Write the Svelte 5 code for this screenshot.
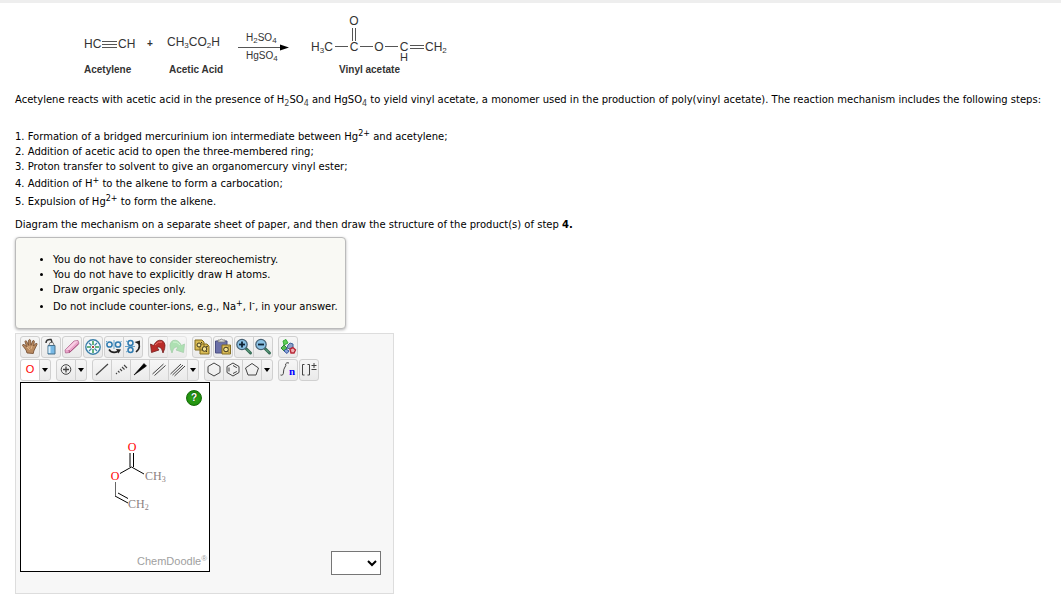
<script>
    // clusters are set apart, groups sit close together, tools inside a group are joined
    const rows = [
        [
            [['hand'], ['clear'], ['erase'], ['center'], ['flipH', 'flipV']],
            [['undo', 'redo']],
            [['copy'], ['paste'], ['zoomIn', 'zoomOut']],
            [['shapes']]
        ],
        [
            [['label', 'more']],
            [['charge', 'more']],
            [['single', 'recessed', 'wedge', 'double', 'triple', 'more']],
            [['hexagon', 'benzene', 'pentagon', 'more']],
            [['chain'], ['bracket']]
        ]
    ];

    const titles = {
        hand: 'Move', clear: 'Clear', erase: 'Erase', center: 'Center', flipH: 'Flip horizontally',
        flipV: 'Flip vertically', undo: 'Undo', redo: 'Redo', copy: 'Copy', paste: 'Paste',
        zoomIn: 'Zoom in', zoomOut: 'Zoom out', shapes: 'Templates', label: 'Oxygen', more: 'More',
        charge: 'Increase charge', single: 'Single bond', recessed: 'Recessed bond', wedge: 'Wedge bond',
        double: 'Double bond', triple: 'Triple bond', hexagon: 'Cyclohexane', benzene: 'Benzene',
        pentagon: 'Cyclopentane', chain: 'Chain', bracket: 'Bracket'
    };

    let active = $state('label');
    let answer = $state('');
</script>

{#snippet icon(name)}
    <svg viewBox="0 0 18 20" width="18" height="20" fill="none" stroke="#444" aria-hidden="true">
        {#if name === 'hand'}
            <path d="M6 16 L5 13 L1.500 8.500 Q1.500 7 3 7.500 L5.500 9.500 L4 4.500 Q4.500 3 5.600 4.200 L7.600 8.300 L7.600 3.200 Q8.500 1.700 9.600 3.200 L10 8.200 L11.800 3.800 Q13.200 3 13.400 4.500 L12.600 9 L14.700 6.500 Q16.400 6 16 7.500 L12.800 14 L12.300 16.500 Z" fill="#b98a60" stroke="#70482b" stroke-width=".8" />
            <path d="M6 10 L9 13 M8 9 L8 11 M11 9 L10 12" stroke="#e2b98e" stroke-width=".9" />
        {:else if name === 'clear'}
            <path d="M6 8.500 H13 V17 H6 Z" fill="#78b9e6" stroke="#49718b" />
            <path d="M7.500 9.500 V16" stroke="#dbf2ff" stroke-width="2" />
            <path d="M7 8 L8 5.500 H11 L12 8" fill="#eee" stroke="#777" />
            <path d="M4 6 Q4 2 9 2.500 L10 5" stroke="#333" stroke-width="1.500" />
        {:else if name === 'erase'}
            <path d="M2 13 L11 4 L15 3.500 L16 6.500 L6.500 15.500 L2.500 16 Z" fill="#eaa4ca" stroke="#b16a91" stroke-width=".8" />
            <path d="M2.500 13 L11.500 4.500 L15 4 L6 13 Z" fill="#f8cee4" stroke="none" />
            <path d="M6 13 L6.500 15.500 L15.500 7" stroke="#a84f7d" />
        {:else if name === 'center'}
            <circle cx="9" cy="10" r="7.200" fill="#f5fcff" stroke="#3b7fa9" stroke-width="1.400" />
            <path d="M9 4 V8 M9 12 V16 M3 10 H7 M11 10 H15" stroke="#399a57" stroke-width="1.500" />
            <path d="M5 6 L7.500 8.500 M13 6 L10.500 8.500 M5 14 L7.500 11.500 M13 14 L10.500 11.500" stroke="#3e80a8" stroke-width="1.200" />
            <path d="M8 9 L10 11 M10 9 L8 11" stroke="#a84343" />
        {:else if name === 'flipH'}
            <circle cx="4.500" cy="7.500" r="2.600" stroke="#2d7ab0" stroke-width="1.500" />
            <circle cx="13" cy="7.500" r="2.600" stroke="#2d7ab0" stroke-width="1.500" />
            <path d="M9 3 V12 M1 4 L3 6 M16.500 4 L15 6" stroke="#68a2c8" />
            <path d="M4 12.500 Q7 17 13 14.500" stroke="#222" stroke-width="1.600" />
            <path d="M11 12 L16 12.500 L13.500 16.500 Z" fill="#222" stroke="none" />
        {:else if name === 'flipV'}
            <circle cx="6.500" cy="6" r="2.500" stroke="#2d7ab0" stroke-width="1.500" />
            <circle cx="6.500" cy="13" r="2.500" stroke="#2d7ab0" stroke-width="1.500" />
            <path d="M1 9.500 H11 M2 4 L4 5 M2 15 L4 14" stroke="#68a2c8" />
            <path d="M12 15 Q17 11 14.500 6" stroke="#222" stroke-width="1.600" />
            <path d="M10.500 5 L16 3.500 L16 8 Z" fill="#222" stroke="none" />
        {:else if name === 'undo'}
            <path d="M1.500 7 L2.500 15.500 L10 13 L8 10.500 Q12 8 14 16 Q18.500 6.500 13 3.500 Q8 2 4.500 8.500 Z" fill="#b92b28" stroke="#741e1e" stroke-width=".8" />
            <path d="M6 8 Q9 4 13 5" stroke="#ef7770" />
        {:else if name === 'redo'}
            <path d="M16.500 7 L15.500 15.500 L8 13 L10 10.500 Q6 8 4 16 Q-.5 6.500 5 3.500 Q10 2 13.500 8.500 Z" fill="#ade0b2" stroke="#a5cea9" stroke-width=".8" />
            <path d="M12 8 Q9 4 5 5" stroke="#d5f5d6" />
        {:else if name === 'copy'}
            <path d="M2 3 H9 L11 5 V13 H2 Z M7 7 H14 L16 9 V17 H7 Z" fill="#d9bb55" stroke="#846d20" />
            <circle cx="6" cy="8" r="2" fill="#f5e597" stroke="#3d351b" />
            <circle cx="11.500" cy="12" r="2.300" fill="#f5e597" stroke="#3d351b" />
            <path d="M8 6 L9 5 M13 10 L15 9 M13 14 L14 15" stroke="#3d351b" />
        {:else if name === 'paste'}
            <path d="M1.500 4 H13 V16 H1.500 Z" fill="#6b70a8" stroke="#4a4e82" />
            <path d="M4 3 H6 Q7 1 9 3 H11 V5 H4 Z" fill="#ddd" stroke="#777" stroke-width=".8" />
            <path d="M8 8 H16.500 V17 H8 Z" fill="#dcbd58" stroke="#846d20" />
            <circle cx="12" cy="12.500" r="2.300" fill="#f4e195" stroke="#3d351b" />
            <path d="M14 10.500 L15 9.500 M14 14.500 L15 15.500" stroke="#3d351b" />
        {:else if name === 'zoomIn' || name === 'zoomOut'}
            <path d="M10.500 11 L15.500 16" stroke="#356c55" stroke-width="3" stroke-linecap="round" />
            <path d="M12 12.500 L15 15.500" stroke="#72b58f" />
            <circle cx="7" cy="7.500" r="5.200" fill="#8ac1e4" stroke="#486174" stroke-width="1.200" />
            <path d="M4 7.500 H10" stroke="#102436" stroke-width="1.800" />
            {#if name === 'zoomIn'}
                <path d="M7 4.500 V10.500" stroke="#102436" stroke-width="1.800" />
            {/if}
        {:else if name === 'shapes'}
            <path d="M5 8 L4 4 L7 2.500 L9 6 Z" fill="#60cf56" stroke="#36a93a" />
            <path d="M2 11 L5 8 L8 11 L5 14 Z" fill="#57bd50" stroke="#2f843c" />
            <path d="M9 8 L11 6 L14 7 V10 L11 12 L8 11 Z" fill="#8d9fc4" stroke="#3f639d" />
            <path d="M11 12 L14 10.500 L16.500 13 L15 16 L12 16 Z" fill="#f0b0b4" stroke="#b82838" stroke-width="1.400" />
            <path d="M5 14 L7 12 L10 14 L8 16.500 Z" fill="#88a6da" stroke="#3755a0" />
        {:else if name === 'label'}
            <text x="9" y="13" text-anchor="middle" fill="red" stroke="none" font-size="11">O</text>
        {:else if name === 'charge'}
            <circle cx="9" cy="9.500" r="4.800" />
            <path d="M9 6.500 V12.500 M6 9.500 H12" stroke-width="1.300" />
        {:else if name === 'single'}
            <path d="M3 15 L15 4" stroke-width="1.200" />
        {:else if name === 'recessed'}
            <path d="M4 13 l1 1 M6 11 l1.500 1.500 M8 9 l2 2 M10 7 l2.500 2.500 M12 5 l3 3" stroke-width="1.100" />
        {:else if name === 'wedge'}
            <path d="M3 15 L13 3.500 L15.500 6 Z" fill="#000" stroke="#000" stroke-width=".6" />
        {:else if name === 'double'}
            <path d="M2.500 14 L13.500 4 M4.500 15.500 L15.500 5.500" />
        {:else if name === 'triple'}
            <path d="M1.500 14 L12 4 M3.500 15 L14 5 M5.500 16 L16 6" />
        {:else if name === 'hexagon'}
            <path d="M9 3 L15 6.500 V12.500 L9 16 L3 12.500 V6.500 Z" />
        {:else if name === 'benzene'}
            <path d="M9 3 L15 6.500 V12.500 L9 16 L3 12.500 V6.500 Z M9 5.500 L12.800 7.700 M12.800 11.500 L9 13.500 M5 11.500 V7.500" />
        {:else if name === 'pentagon'}
            <path d="M9 3.500 L15.500 8 L13 15 H5 L2.500 8 Z" />
        {:else if name === 'chain'}
            <path d="M1.500 15 Q4.500 16 4.500 12 Q4.500 9 6 7 Q7.500 5 6.500 4 Q7.500 2 10 3" />
            <text class="n" x="10" y="15" fill="blue" stroke="none" font-size="11">n</text>
        {:else if name === 'bracket'}
            <path d="M4.500 4.500 H2.500 V15 H4.500 M7.500 4.500 H9.500 V15 H7.500 M14 3 V8 M11.500 5.500 H16.500 M11.500 9.500 H16.500" />
        {/if}
    </svg>
{/snippet}

<div class="strip"></div>
<main>
    <figure>
        <svg class="scheme" viewBox="70 10 400 70" width="400" height="70" role="img" aria-label="Acetylene and acetic acid give vinyl acetate">
            <g font-size="12">
                <text x="84" y="48">HC</text>
                <text x="118" y="48">CH</text>
                <text x="150" y="47" text-anchor="middle" font-size="10" font-weight="bold">+</text>
                <text x="167" y="46">CH<tspan class="sub" dy="2">3</tspan><tspan dy="-2">CO</tspan><tspan class="sub" dy="2">2</tspan><tspan dy="-2">H</tspan></text>
                <text x="311" y="51">H<tspan class="sub" dy="2">3</tspan><tspan dy="-2">C</tspan></text>
                <text x="354" y="51" text-anchor="middle">C</text>
                <text x="354" y="25" text-anchor="middle">O</text>
                <text x="379" y="51" text-anchor="middle">O</text>
                <text x="404" y="51" text-anchor="middle">C</text>
                <text x="404" y="61" text-anchor="middle" font-size="11">H</text>
                <text x="425" y="51">CH<tspan class="sub" dy="2">2</tspan></text>
            </g>
            <g font-size="10">
                <text x="246" y="41">H<tspan class="sub" dy="2">2</tspan><tspan dy="-2">SO</tspan><tspan class="sub" dy="2">4</tspan></text>
                <text x="246" y="59">HgSO<tspan class="sub" dy="2">4</tspan></text>
            </g>
            <g font-size="10" font-weight="bold">
                <text x="84" y="73">Acetylene</text>
                <text x="169" y="73">Acetic Acid</text>
                <text x="339" y="73">Vinyl acetate</text>
            </g>
            <path d="M102 41.500 H117 M102 44.500 H117 M102 47.500 H117 M238 47.500 H282 M335 46.500 H348 M352.500 28 V41 M355.500 28 V41 M360 46.500 H373 M385 46.500 H398 M410 45.500 H424 M410 48.500 H424" stroke="#555" />
            <path d="M280 44.500 L289 47.500 L280 50.500 Z" fill="#000" />
        </svg>
    </figure>

    <p class="intro">Acetylene reacts with acetic acid in the presence of H<sub>2</sub>SO<sub>4</sub> and HgSO<sub>4</sub> to yield vinyl acetate, a monomer used in the production of poly(vinyl acetate). The reaction mechanism includes the following steps:</p>

    <div class="steps">
        <p>1. Formation of a bridged mercurinium ion intermediate between Hg<sup>2+</sup> and acetylene;</p>
        <p>2. Addition of acetic acid to open the three-membered ring;</p>
        <p>3. Proton transfer to solvent to give an organomercury vinyl ester;</p>
        <p>4. Addition of H<sup>+</sup> to the alkene to form a carbocation;</p>
        <p>5. Expulsion of Hg<sup>2+</sup> to form the alkene.</p>
    </div>

    <p class="task">Diagram the mechanism on a separate sheet of paper, and then draw the structure of the product(s) of step <b>4.</b></p>

    <ul class="notes">
        <li>You do not have to consider stereochemistry.</li>
        <li>You do not have to explicitly draw H atoms.</li>
        <li>Draw organic species only.</li>
        <li>Do not include counter-ions, e.g., Na<sup>+</sup>, I<sup>-</sup>, in your answer.</li>
    </ul>

    <section class="editor">
        {#each rows as clusters}
            <div class="row">
                {#each clusters as groups}
                    <div class="cluster">
                        {#each groups as group}
                            <div class="group">
                                {#each group as tool}
                                    {#if tool === 'more'}
                                        <button class="more" aria-label={titles.more}><svg viewBox="0 0 6 4" width="6" height="4" aria-hidden="true"><path d="M0 0 H6 L3 4 Z" /></svg></button>
                                    {:else}
                                        <button class:active={active === tool} class:faded={tool === 'redo'} aria-label={titles[tool]} onclick={() => (active = tool)}>{@render icon(tool)}</button>
                                    {/if}
                                {/each}
                            </div>
                        {/each}
                    </div>
                {/each}
            </div>
        {/each}

        <div class="work">
            <div class="canvas">
                <svg viewBox="0 0 188 188" width="188" height="188" role="img" aria-label="Vinyl acetate">
                    <path d="M109 70 V84 M112.500 70 V84 M110.500 84 L99 90.500 M110.500 84 L123 91 M94 113 L107 120 M97 110 L107 115.500" fill="none" stroke="#000" />
                    <path d="M94.500 99 V113" stroke="#666" />
                    <g class="atoms" font-size="12" fill="#8a8080">
                        <text x="111" y="68" text-anchor="middle" fill="red">O</text>
                        <text x="94" y="97" text-anchor="middle" fill="red">O</text>
                        <text x="124" y="97">CH<tspan class="sub" dy="2">3</tspan></text>
                        <text x="107" y="125">CH<tspan class="sub" dy="2">2</tspan></text>
                    </g>
                    <text x="116" y="182" font-size="11" fill="#a0a0a0">ChemDoodle<tspan font-size="8" dy="-4">®</tspan></text>
                </svg>
                <button class="help" aria-label="Help">?</button>
            </div>
            <select bind:value={answer} aria-label="Structure">
                <option value=""></option>
            </select>
        </div>
    </section>
</main>

<style>
    :global(body) {
        background: #fff;
    }

    .strip {
        height: 3px;
        background: #eee;
    }

    main {
        padding: 7px 15px 16px;
        font: 10px/15px Verdana, "DejaVu Sans", sans-serif;
        color: #000;
    }

    svg {
        display: block;
        font-family: "Liberation Sans", Arial, sans-serif;
    }

    figure {
        margin: 0 0 12px 55px;
    }

    .scheme {
        fill: #333;
    }

    .sub {
        font-size: 8px;
    }

    p {
        margin: 0;
    }

    sub,
    sup {
        font-size: 8px;
        line-height: 14px;
    }

    sub {
        color: #444;
    }

    .intro {
        margin-bottom: 16px;
    }

    .task {
        margin: 8px 0 5px;
    }

    .notes {
        box-sizing: border-box;
        width: 331px;
        max-width: 100%;
        margin: 0 0 4px;
        padding: 14px 0 14px 37px;
        background: #f9f9f4;
        border: 1px solid #bbb;
        border-radius: 4px;
        box-shadow: 0 1px 3px rgba(0, 0, 0, 0.3);
    }

    .editor {
        box-sizing: border-box;
        width: 379px;
        max-width: 100%;
        padding: 2px 12px 18px 4px;
        background: #f7f7f7;
        border: 1px solid #ddd;
    }

    .row {
        display: flex;
        gap: 5px;
        margin-bottom: 1px;
    }

    .cluster {
        display: flex;
        gap: 1px;
    }

    .group {
        display: flex;
    }

    .group button {
        box-sizing: border-box;
        display: flex;
        align-items: center;
        justify-content: center;
        width: 20px;
        height: 22px;
        padding: 0;
        background: linear-gradient(#f6f6f6, #eaeaea);
        border: 1px solid #d0d0d0;
    }

    .group button + button {
        margin-left: -1px;
    }

    .group button:first-child {
        border-top-left-radius: 3px;
        border-bottom-left-radius: 3px;
    }

    .group button:last-child {
        border-top-right-radius: 3px;
        border-bottom-right-radius: 3px;
    }

    .group .more {
        width: 12px;
    }

    .group .active {
        background: #fff;
    }

    .group .faded {
        border-color: #e4e4e4;
    }

    .n {
        font-family: "Liberation Serif", serif;
        font-weight: bold;
    }

    .work {
        display: flex;
        justify-content: space-between;
        height: 193px;
    }

    .canvas {
        position: relative;
        align-self: flex-start;
        background: #fff;
        border: 1px solid #000;
    }

    .atoms {
        font-family: "Liberation Serif", serif;
    }

    .help {
        position: absolute;
        top: 7px;
        right: 7px;
        width: 16px;
        height: 16px;
        padding: 0;
        border: 1px solid #156b08;
        border-radius: 50%;
        background: radial-gradient(#35b51c, #167d08);
        color: #fff;
        font: bold 10px/14px "Liberation Sans", Arial, sans-serif;
        text-shadow: 0 0 2px #000;
    }

    select {
        align-self: flex-end;
        width: 50px;
        height: 24px;
        background: #fff;
        border: 1px solid #767676;
        border-radius: 0;
    }
</style>
